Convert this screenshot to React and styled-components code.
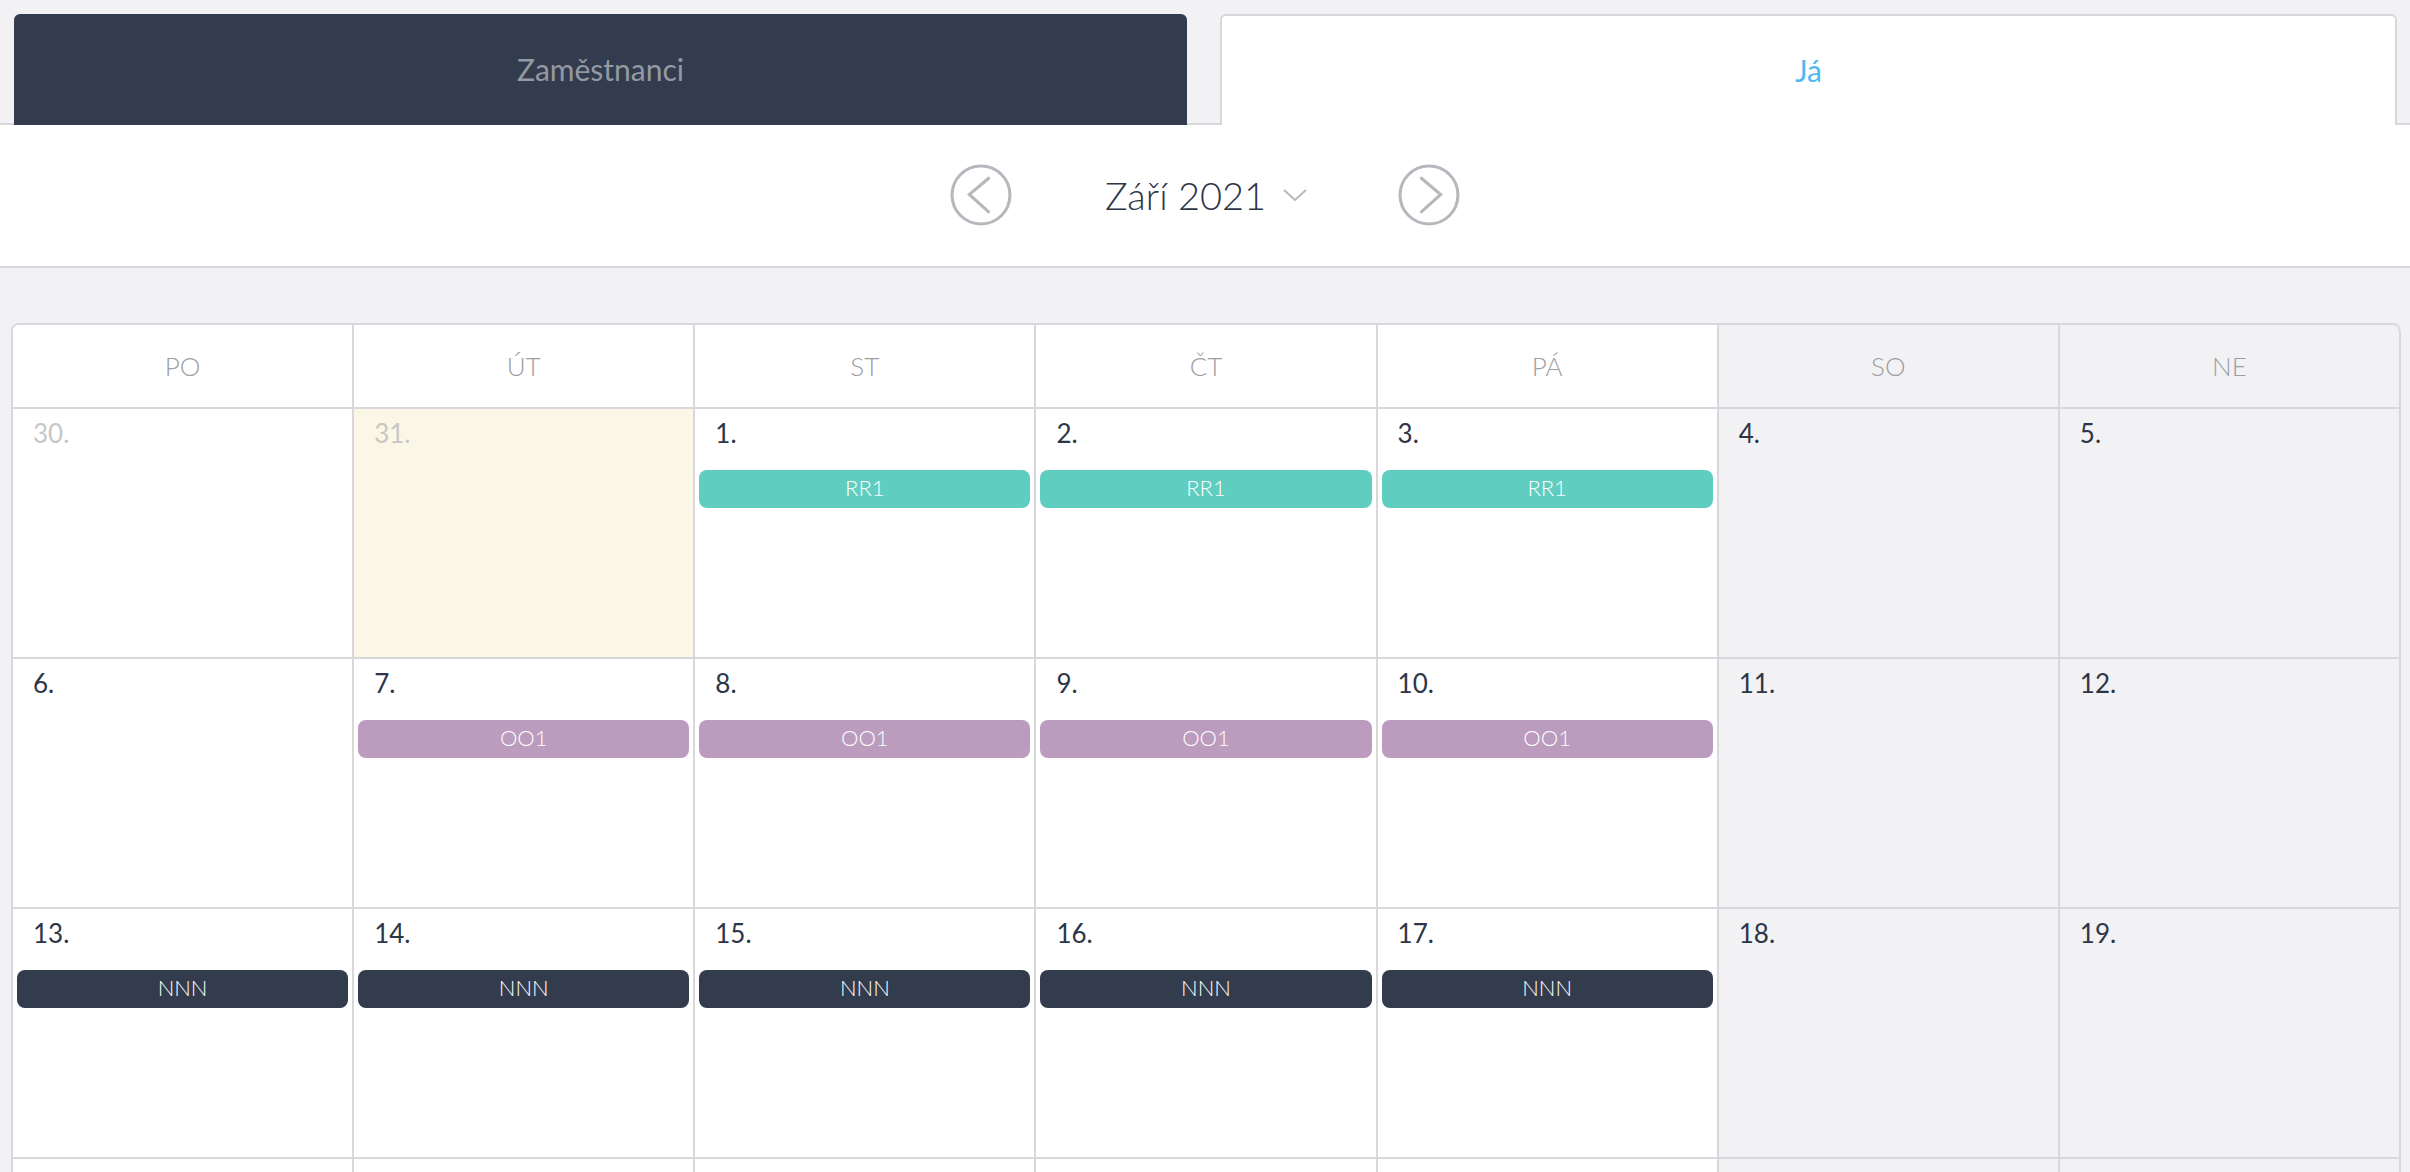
import React from 'react';
import styled, { createGlobalStyle } from 'styled-components';

const GlobalStyle = createGlobalStyle`
  html, body {
    margin: 0;
    padding: 0;
    background: #f2f2f4;
    font-family: Lato, "Open Sans", "DejaVu Sans", sans-serif;
    height: 1172px;
    overflow: hidden;
  }
  * { box-sizing: border-box; }
`;

const WEEKDAYS = ['PO', 'ÚT', 'ST', 'ČT', 'PÁ', 'SO', 'NE'];

const EVENT_COLORS = {
  RR1: '#5fcdc0',
  OO1: '#bb9bbe',
  NNN: '#323c4d',
};

// the fourth week only peeks in at the bottom edge, its numbers sit below the fold
const WEEKS = [
  [
    { day: 30, muted: true },
    { day: 31, muted: true, today: true },
    { day: 1, event: 'RR1' },
    { day: 2, event: 'RR1' },
    { day: 3, event: 'RR1' },
    { day: 4 },
    { day: 5 },
  ],
  [
    { day: 6 },
    { day: 7, event: 'OO1' },
    { day: 8, event: 'OO1' },
    { day: 9, event: 'OO1' },
    { day: 10, event: 'OO1' },
    { day: 11 },
    { day: 12 },
  ],
  [
    { day: 13, event: 'NNN' },
    { day: 14, event: 'NNN' },
    { day: 15, event: 'NNN' },
    { day: 16, event: 'NNN' },
    { day: 17, event: 'NNN' },
    { day: 18 },
    { day: 19 },
  ],
  [
    { day: 20, hidden: true },
    { day: 21, hidden: true },
    { day: 22, hidden: true },
    { day: 23, hidden: true },
    { day: 24, hidden: true },
    { day: 25, hidden: true },
    { day: 26, hidden: true },
  ],
];

function CircleArrow({ dir }) {
  const pts = dir === 'left' ? '38,14 19,30 38,47' : '23,14 42,30 23,47';
  return (
    <svg width="62" height="62" viewBox="0 0 61 61">
      <circle cx="30.5" cy="30.5" r="28.5" fill="none" stroke="#b6b8bd" strokeWidth="3" />
      <polyline points={pts} fill="none" stroke="#b6b8bd" strokeWidth="3" strokeLinecap="round" />
    </svg>
  );
}

export default function App() {
  return (
    <>
      <GlobalStyle />
      <Page>
        <TabBar>
          <Tab $active={false}>Zaměstnanci</Tab>
          <Tab $active>Já</Tab>
        </TabBar>
        <NavPanel>
          <ArrowButton><CircleArrow dir="left" /></ArrowButton>
          <MonthPicker>
            <MonthLabel>Září 2021</MonthLabel>
            <svg width="26" height="14" viewBox="0 0 26 14">
              <polyline points="2,2 13,12 24,2" fill="none" stroke="#b6b8bd" strokeWidth="2" />
            </svg>
          </MonthPicker>
          <ArrowButton><CircleArrow dir="right" /></ArrowButton>
        </NavPanel>
        <CalendarWrap>
          <Calendar>
            {WEEKDAYS.map((w, i) => (
              <HeadCell key={w} $weekend={i > 4}>{w}</HeadCell>
            ))}
            {WEEKS.map((week) => week.map((d, i) => (
              <DayCell key={`${d.day}-${i}`} $weekend={i > 4} $today={d.today}>
                {!d.hidden && (
                  <DayNumber $muted={d.muted}>
                    {d.day}
                    .
                  </DayNumber>
                )}
                {d.event && (
                  <EventBar $color={EVENT_COLORS[d.event]}>{d.event}</EventBar>
                )}
              </DayCell>
            )))}
          </Calendar>
        </CalendarWrap>
      </Page>
    </>
  );
}

const Page = styled.div`
  height: 1172px;
  overflow: hidden;
`;

const TabBar = styled.div`
  display: flex;
  gap: 33px;
  padding: 14px 13px 0 14px;
  margin-bottom: -2px;
  position: relative;
  z-index: 1;
`;

const Tab = styled.div`
  flex: 1;
  height: 111px;
  display: flex;
  align-items: center;
  justify-content: center;
  padding-bottom: 2px;
  font-size: 30px;
  border-radius: 6px 6px 0 0;
  background: ${(p) => (p.$active ? '#ffffff' : '#323c4e')};
  color: ${(p) => (p.$active ? '#4fb9f1' : '#9499a2')};
  border: ${(p) => (p.$active ? '2px solid #d8d8dc' : 'none')};
  border-bottom: none;
`;

const NavPanel = styled.div`
  height: 145px;
  background: #ffffff;
  border-top: 2px solid #d8d8dc;
  border-bottom: 2px solid #d8d8dc;
  display: flex;
  align-items: center;
  justify-content: center;
  padding-bottom: 2px;
`;

const ArrowButton = styled.div`
  width: 62px;
  height: 62px;
  display: flex;
  cursor: pointer;
`;

const MonthPicker = styled.div`
  display: flex;
  align-items: center;
  gap: 16px;
  margin: 0 90px 0 93px;
  cursor: pointer;
`;

const MonthLabel = styled.span`
  font-size: 38px;
  font-weight: 300;
  color: #2d3648;
`;

const CalendarWrap = styled.div`
  padding: 55px 9px 0 11px;
`;

const Calendar = styled.div`
  display: grid;
  grid-template-columns: repeat(7, 1fr);
  border-top: 2px solid #d8d8dc;
  border-left: 2px solid #d8d8dc;
  border-radius: 8px 8px 0 0;
  overflow: hidden;
  background: #ffffff;

  & > div:nth-child(7) {
    border-top-right-radius: 8px;
  }
`;

const HeadCell = styled.div`
  height: 84px;
  display: flex;
  align-items: center;
  justify-content: center;
  font-size: 26px;
  font-weight: 300;
  color: #9d9ea4;
  background: ${(p) => (p.$weekend ? '#f2f2f4' : '#ffffff')};
  border-right: 2px solid #d8d8dc;
  border-bottom: 2px solid #d8d8dc;
`;

const DayCell = styled.div`
  height: 250px;
  padding: 9px 4px 0 4px;
  background: ${(p) => {
    if (p.$today) return '#faf7e6';
    if (p.$weekend) return '#f2f2f4';
    return '#ffffff';
  }};
  border-right: 2px solid #d8d8dc;
  border-bottom: 2px solid #d8d8dc;
`;

const DayNumber = styled.div`
  font-size: 26px;
  line-height: 1.2;
  padding-left: 16px;
  color: ${(p) => (p.$muted ? '#c7c7c5' : '#2d3648')};
`;

const EventBar = styled.div`
  margin-top: 21px;
  height: 38px;
  line-height: 36px;
  border-radius: 8px;
  text-align: center;
  font-size: 22px;
  font-weight: 300;
  color: #ffffff;
  background: ${(p) => p.$color};
`;
